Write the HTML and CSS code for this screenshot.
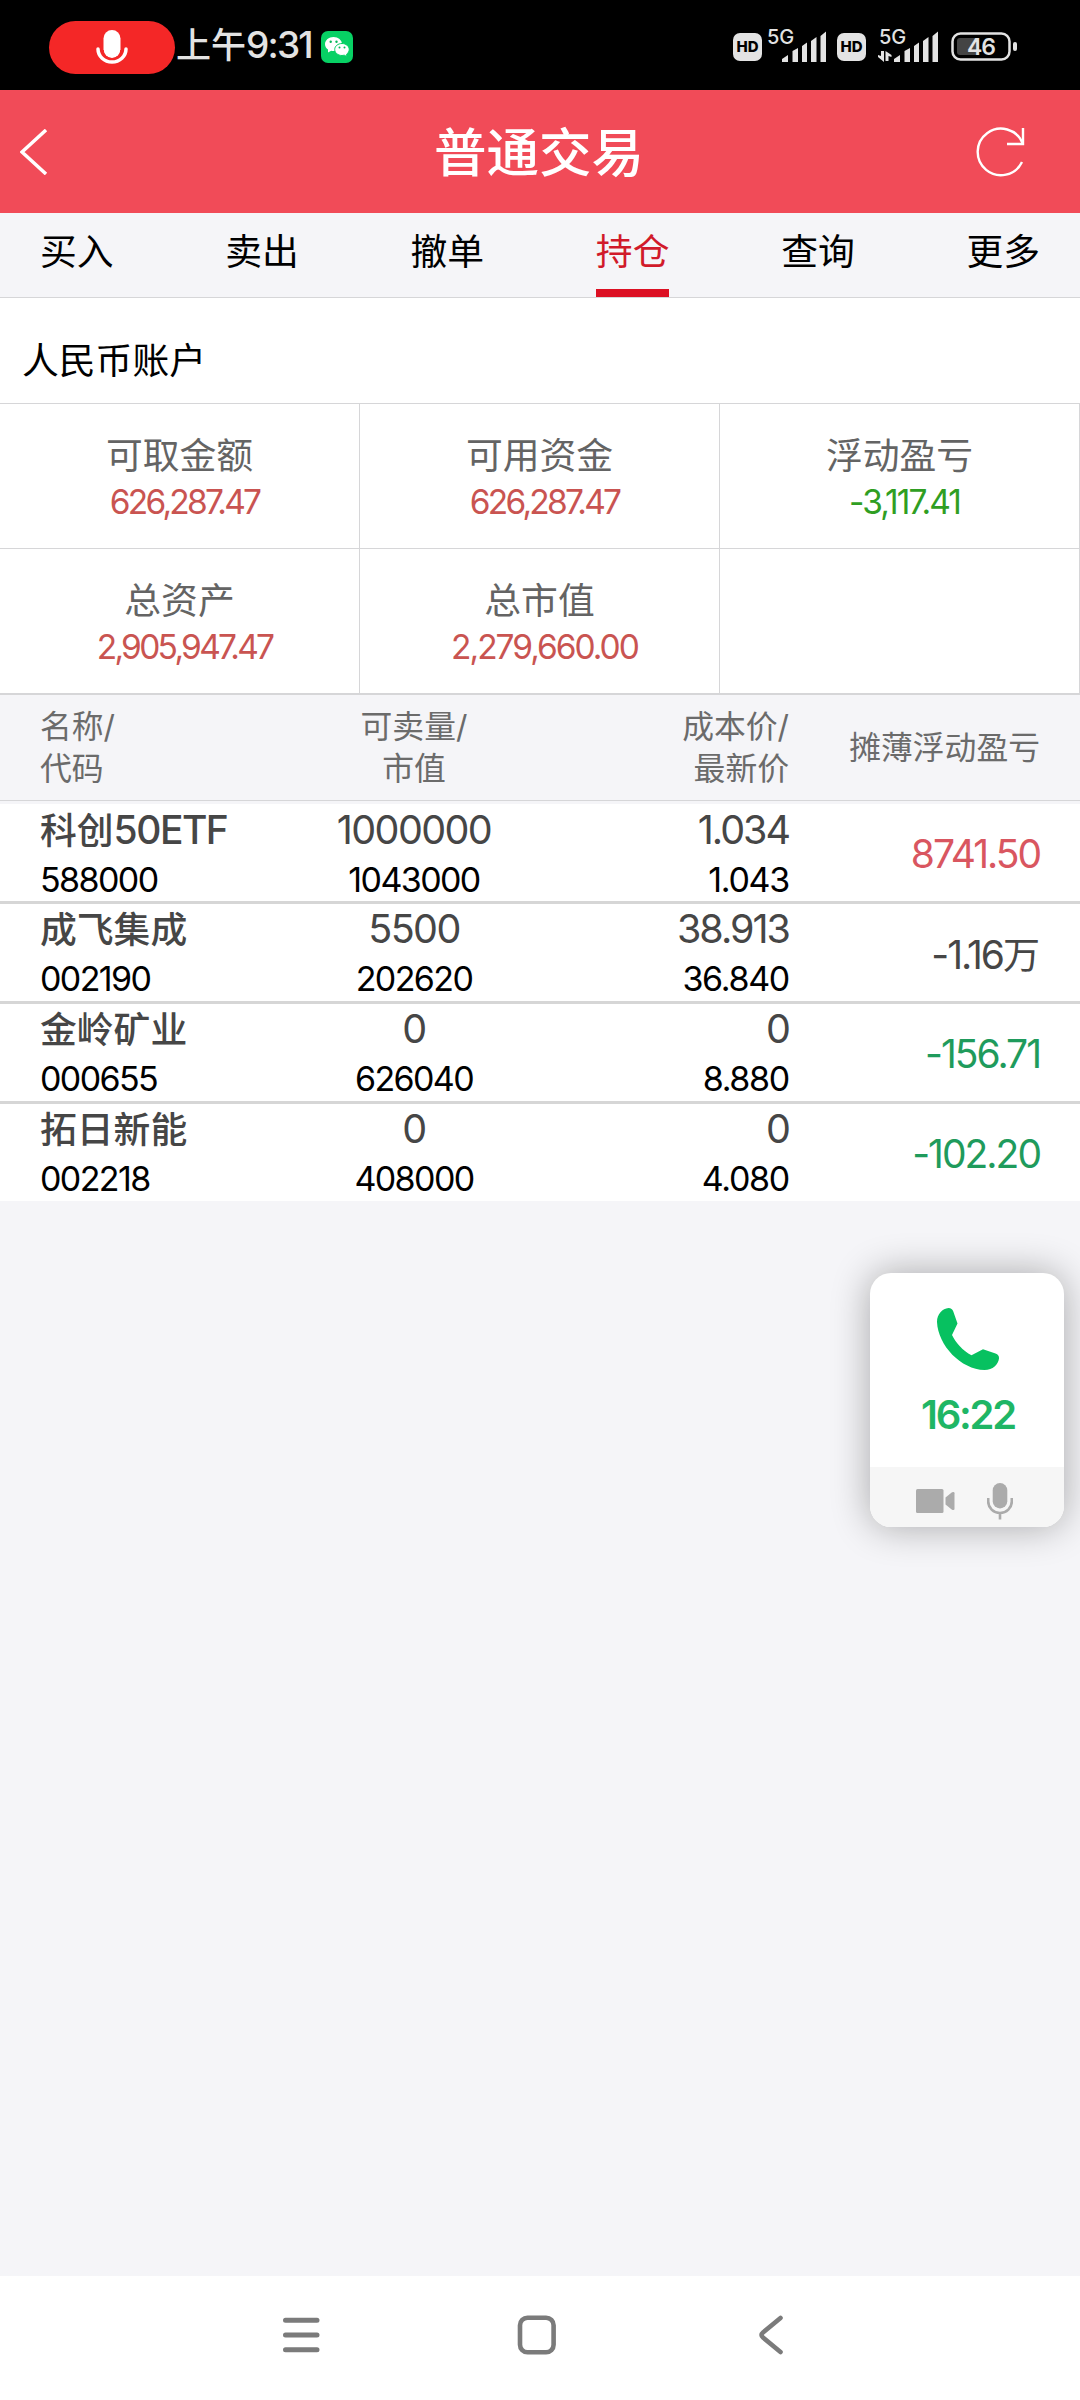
FILE: index.html
```html
<!DOCTYPE html>
<html lang="zh-CN">
<head>
  <meta charset="UTF-8" />
  <meta name="viewport" content="width=device-width, initial-scale=1.0"/>
  <title>普通交易</title>
  <link rel="stylesheet" href="styles.css">
</head>
<body>

  <div class="status-bar">
    <div class="status-left">
      <span class="mic-pill">
        <svg width="32" height="36" viewBox="0 0 32 36">
          <rect x="7.5" y="1" width="17" height="28" rx="8.5" fill="#fff"/>
          <path d="M2 20a14 13 0 0 0 28 0" fill="none" stroke="#fff" stroke-width="3.5" stroke-linecap="round"/>
          <path d="M7 21a9 9 0 0 0 18 0" fill="none" stroke="#f42727" stroke-width="1.5"/>
        </svg>
      </span>
      <span class="clock"><span class="clock-cn">上午</span>9:31</span>
      <svg class="wechat" width="32" height="32" viewBox="0 0 32 32">
        <rect width="32" height="32" rx="7" fill="#07d164"/>
        <path d="M12.5 6C7.800 6 4 9.200 4 13.200c0 2.200 1.200 4.100 3 5.400V21.500l3.200-1.700c.7.2 1.500.3 2.300.3 4.700 0 8.500-3.100 8.500-7S17.200 6 12.500 6z" fill="#fff"/>
        <path d="M21 12.500c-4.100 0-7.300 2.700-7.300 6s3.200 6 7.300 6c.8 0 1.600-.1 2.300-.3l2.400 1.300v-2.400c1.600-1.100 2.500-2.700 2.500-4.600 0-3.300-3.200-6-7.200-6z" fill="#fff" stroke="#07d164" stroke-width="1"/>
        <g fill="#07b858">
          <circle cx="9.700" cy="10.800" r="1.200"/><circle cx="15.500" cy="10.800" r="1.200"/>
          <circle cx="18.500" cy="16.500" r="1"/><circle cx="23.500" cy="16.500" r="1"/>
        </g>
      </svg>
    </div>
    <div class="status-right">
      <span class="hd">HD</span>
      <span class="signal">
        <span class="net">5G</span>
        <svg width="58" height="32" viewBox="0 0 58 32" fill="#e3e3e3">
          <path d="M14 31v-3l6-4v7zM24.500 31V20l5.500-3v14zM34 31V15l5-3.500V31zM43 31V10l5.500-4v25zM52.500 31V5L58 .5V31z"/>
        </svg>
      </span>
      <span class="hd hd-second">HD</span>
      <span class="signal">
        <span class="net">5G</span>
        <svg width="61" height="32" viewBox="0 0 61 32" fill="#e3e3e3">
          <path d="M17 31v-3l6-4v7zM27.500 31V20l5.500-3v14zM37 31V15l5-3.500V31zM46 31V10l5.500-4v25zM55.500 31V5L61 .5V31z"/>
          <path d="M4 20h3v11l-6-5v-2l3 1zM8.500 20l6 4v2l-3-1v5h-3z"/>
        </svg>
      </span>
      <svg class="battery" width="67" height="30" viewBox="0 0 67 30">
        <rect x="1.500" y="1.500" width="57" height="26" rx="8" fill="none" stroke="#e3e3e3" stroke-width="2.500"/>
        <rect x="6" y="6" width="22" height="17" rx="3" fill="#444"/>
        <rect x="62" y="10" width="4" height="9" rx="2" fill="#e3e3e3"/>
        <text x="30" y="22.500" text-anchor="middle" class="battery-text">46</text>
      </svg>
    </div>
  </div>

  <header class="header">
    <svg width="28" height="46" viewBox="0 0 28 46" fill="none" stroke="#fff" stroke-width="3.500">
      <path d="M26 1L2 23l24 22"/>
    </svg>
    <h1>普通交易</h1>
    <svg width="50" height="50" viewBox="0 0 50 50" fill="none" stroke="#fff" stroke-width="2.400">
      <path d="M46 35A23.300 23.300 0 1 1 46.500 16"/>
      <path d="M47 1v16H31"/>
    </svg>
  </header>

  <nav class="tabs">
    <a class="tab">买入</a>
    <a class="tab">卖出</a>
    <a class="tab">撤单</a>
    <a class="tab active">持仓</a>
    <a class="tab">查询</a>
    <a class="tab">更多</a>
  </nav>

  <div class="account">人民币账户</div>

  <div class="summary">
    <div class="cell"><span class="label">可取金额</span><span class="value red">626,287.47</span></div>
    <div class="cell"><span class="label">可用资金</span><span class="value red">626,287.47</span></div>
    <div class="cell"><span class="label">浮动盈亏</span><span class="value green">-3,117.41</span></div>
    <div class="cell"><span class="label">总资产</span><span class="value red">2,905,947.47</span></div>
    <div class="cell"><span class="label">总市值</span><span class="value red wide">2,279,660.00</span></div>
    <div class="cell"></div>
  </div>

  <div class="row thead">
    <div>名称/<br>代码</div>
    <div>可卖量/<br>市值</div>
    <div>成本价/<br>最新价</div>
    <div>摊薄浮动盈亏</div>
  </div>

  <div class="holdings">
    <div class="row">
      <div><b class="name">科创<span class="latin">50ETF</span></b><span class="sub">588000</span></div>
      <div><span class="main">1000000</span><span class="sub">1043000</span></div>
      <div><span class="main">1.034</span><span class="sub">1.043</span></div>
      <div class="profit up">8741.50</div>
    </div>
    <div class="row">
      <div><b class="name">成飞集成</b><span class="sub">002190</span></div>
      <div><span class="main">5500</span><span class="sub">202620</span></div>
      <div><span class="main">38.913</span><span class="sub">36.840</span></div>
      <div class="profit">-1.16<span class="unit">万</span></div>
    </div>
    <div class="row">
      <div><b class="name">金岭矿业</b><span class="sub">000655</span></div>
      <div><span class="main">0</span><span class="sub">626040</span></div>
      <div><span class="main">0</span><span class="sub">8.880</span></div>
      <div class="profit down">-156.71</div>
    </div>
    <div class="row">
      <div><b class="name">拓日新能</b><span class="sub">002218</span></div>
      <div><span class="main">0</span><span class="sub">408000</span></div>
      <div><span class="main">0</span><span class="sub">4.080</span></div>
      <div class="profit down">-102.20</div>
    </div>
  </div>

  <!-- 悬浮通话窗 -->
  <div class="call">
    <div class="call-top">
      <svg width="64" height="64" viewBox="0 0 64 64" fill="#07c160">
        <path d="M1 15C1 7 6.500 1.500 12.500 1c2.500 0 4 1.200 4.800 3.500L21.500 16.500 16 28C19.500 35.500 27 44 35.500 48.200L47 42.200l12.500 4.300c2.500.9 3.800 2.500 3.500 5-.8 6-6 11.500-14.500 11.500C25 62.500 2 38.500 1 15z"/>
      </svg>
      <span class="call-time">16:22</span>
    </div>
    <div class="call-bottom">
      <svg width="39" height="24" viewBox="0 0 39 24" fill="#ababab">
        <rect width="27.500" height="24" rx="1.500"/>
        <path d="M29.500 8.500L36 3.300q2.500-1 2.500 1v15.400q0 2-2.500 1l-6.500-5.200z"/>
      </svg>
      <svg width="26" height="37" viewBox="0 0 26 37">
        <rect x="5.700" y="0" width="14.600" height="25.500" rx="7.300" fill="#ababab"/>
        <path d="M1.200 15v3.500a11.800 11.500 0 0 0 23.600 0V15M13 30v6.500" fill="none" stroke="#ababab" stroke-width="2.600"/>
      </svg>
    </div>
  </div>

  <div class="nav-bar">
    <svg width="38" height="40" viewBox="0 0 38 40" fill="none" stroke="#7b7b7b" stroke-width="5" stroke-linecap="round">
      <path d="M3.500 5.300h31.500M3.500 20h31.500M3.500 34.700h31.500"/>
    </svg>
    <svg class="home" width="40" height="40" viewBox="0 0 40 40" fill="none" stroke="#7b7b7b" stroke-width="4.600">
      <rect x="3" y="2.800" width="33.600" height="34.400" rx="7.500"/>
    </svg>
    <svg width="26" height="40" viewBox="0 0 26 40" fill="none" stroke="#7b7b7b" stroke-width="4.600" stroke-linecap="round">
      <path d="M22.500 3L5 17.500q-3 2.500 0 5L22.500 37"/>
    </svg>
  </div>

</body>
</html>
```
FILE: styles.css
```css
body {
  margin: 0;
  width: 1080px;
  height: 2400px;
  display: flex;
  flex-direction: column;
  position: relative;
  font-family: Inter, 'Noto Sans CJK SC', sans-serif;
  font-size: 36.800px;
  background: #f5f5f8;
  color: #000;
}

svg {
  display: block;
  flex: none;
}

/* Status bar */
.status-bar {
  height: 90px;
  padding: 4px 62px 0 49px;
  box-sizing: border-box;
  background: #000;
  color: #e3e3e3;
  display: flex;
  justify-content: space-between;
}

.status-left,
.status-right {
  display: flex;
  align-items: center;
}

.mic-pill {
  width: 126px;
  height: 53px;
  border-radius: 27px;
  background: #f42727;
  display: flex;
  align-items: center;
  justify-content: center;
}

.clock {
  margin: 0 0 4px 1px;
  font-size: 37px;
  line-height: 48px;
  font-weight: 500;
  letter-spacing: -1.8px;
}

.clock-cn {
  font-size: 35px;
  letter-spacing: 0;
}

.wechat {
  margin-left: 9px;
}

.hd {
  width: 29px;
  height: 28px;
  border-radius: 7px;
  background: #e3e3e3;
  color: #000;
  font-size: 15px;
  font-weight: 800;
  line-height: 28px;
  text-align: center;
}

.hd-second {
  margin: 0 11px;
}

.signal {
  position: relative;
  margin-left: 6px;
}

.hd-second + .signal {
  margin-left: 0;
}

.net {
  position: absolute;
  left: -1px;
  top: -4px;
  font-size: 20px;
  line-height: 20px;
  font-weight: 500;
}

.hd-second + .signal .net {
  left: 2px;
}

.battery {
  margin-left: 13px;
}

.battery-text {
  font-size: 23px;
  font-weight: 600;
  letter-spacing: -1px;
  fill: #e3e3e3;
}

/* Header */
.header {
  height: 123px;
  padding: 0 54px 0 20px;
  box-sizing: border-box;
  background: #f14b58;
  color: #fff;
  display: flex;
  align-items: center;
  justify-content: space-between;
}

h1 {
  margin: 2px 0 0 54px;
  font-size: 52.500px;
  line-height: 60px;
  font-weight: 500;
}

/* Tabs */
.tabs {
  height: 84px;
  padding: 0 40px;
  border-bottom: 1px solid #d6d6d8;
  display: flex;
  justify-content: space-between;
}

.tab {
  height: 76px;
  line-height: 78px;
  border-bottom: 8px solid transparent;
}

.tab.active {
  color: #d11a2a;
  border-color: #dc1023;
}

.account {
  height: 105px;
  padding-left: 22px;
  line-height: 125px;
  background: #fff;
}

/* Summary grid */
.summary {
  display: grid;
  grid-template-columns: repeat(3, 360px);
  background: #fff;
  border-bottom: 1px solid #d6d6d8;
}

.cell {
  height: 145px;
  padding-top: 28px;
  box-sizing: border-box;
  border-top: 1px solid #d6d6d8;
  border-right: 1px solid #d6d6d8;
  display: flex;
  flex-direction: column;
  align-items: center;
}

.label {
  line-height: 48px;
  color: #646464;
}

.value {
  padding-left: 10px;
  font-size: 33.500px;
  line-height: 45px;
  letter-spacing: -2.700px;
}

.value.green {
  letter-spacing: -1.900px;
}

.value.wide {
  letter-spacing: -2px;
}

.red {
  color: #c95451;
}

.green {
  color: #2f9e22;
}

/* Holdings table */
.row {
  display: grid;
  grid-template-columns: 249px 250px 250px 251px;
  align-items: center;
  padding: 0 40px;
}

.row > :nth-child(2) {
  text-align: center;
}

.row > :nth-child(n+3) {
  text-align: right;
}

.thead {
  height: 105px;
  border-top: 1px solid #d6d6d8;
  border-bottom: 1px solid #d6d6d8;
  margin-bottom: 3px;
  font-size: 31.800px;
  line-height: 42px;
  color: #6b6b6b;
}

.holdings .row {
  height: 97px;
  background: #fff;
  border-bottom: 3px solid #d6d6d6;
}

.holdings .row:last-child {
  border-bottom: none;
}

.name,
.main,
.sub {
  display: block;
}

.name,
.main {
  line-height: 50px;
  color: #464646;
}

.name {
  padding-top: 1px;
  line-height: 49px;
  font-weight: 500;
}

.latin {
  font-size: 39px;
  letter-spacing: -1.500px;
}

.main {
  font-size: 39.500px;
  letter-spacing: -1.600px;
}

.sub {
  padding-top: 1px;
  font-size: 34px;
  line-height: 47px;
  letter-spacing: -1.600px;
}

.row > :nth-child(3) .main {
  letter-spacing: -2px;
}

.row > :nth-child(3) .sub {
  letter-spacing: -1.300px;
}

.profit {
  font-size: 39px;
  letter-spacing: -2px;
  color: #464646;
}

.unit {
  font-size: 37px;
  letter-spacing: 0;
}

.up {
  color: #d95660;
}

.down {
  color: #1f9b5c;
}

/* Floating call window */
.call {
  position: absolute;
  left: 870px;
  top: 1273px;
  width: 194px;
  height: 254px;
  border-radius: 21px;
  overflow: hidden;
  background: #fff;
  box-shadow: 0 0 38px rgba(0, 0, 0, 0.32);
}

.call-top {
  height: 194px;
  padding: 34px 0 0 2px;
  box-sizing: border-box;
  display: flex;
  flex-direction: column;
  align-items: center;
}

.call-time {
  margin-top: 20px;
  font-size: 40px;
  line-height: 48px;
  font-weight: 600;
  letter-spacing: -2.200px;
  color: #1fb665;
}

.call-bottom {
  height: 60px;
  padding: 8px 5px 0 0;
  box-sizing: border-box;
  background: #f6f6f6;
  display: flex;
  align-items: center;
  justify-content: center;
  gap: 32px;
}

/* System navigation */
.nav-bar {
  height: 124px;
  margin-top: auto;
  padding: 0 296px 7px 282px;
  box-sizing: border-box;
  background: #fff;
  display: flex;
  align-items: center;
  justify-content: space-between;
}

.home {
  margin-right: 5px;
}
```
